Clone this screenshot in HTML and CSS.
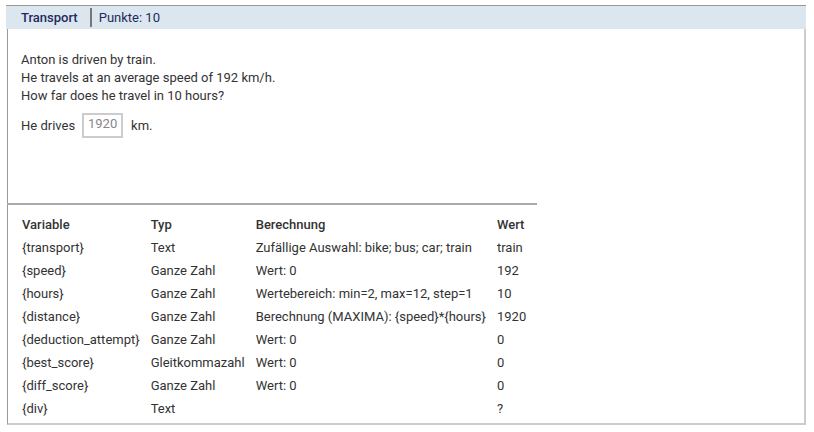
FILE: index.html
```html
<!DOCTYPE html>
<html>
<head>
<meta charset="utf-8">
<link rel="stylesheet" href="styles.css">
</head>
<body>
<div class="panel">
  <div class="panel-head">
    <span class="title">Transport</span>
    <span class="divider"></span>
    <span class="points">Punkte: 10</span>
  </div>
  <div class="panel-body">
    <div class="question">
      <p class="text">Anton is driven by train.<br>He travels at an average speed of 192 km/h.<br>How far does he travel in 10 hours?</p>
      <div class="answer">
        <span>He drives</span>
        <span class="input">1920</span>
        <span>km.</span>
      </div>
    </div>
    <div class="vars">
      <table class="var-table">
        <thead>
          <tr><th>Variable</th><th>Typ</th><th>Berechnung</th><th>Wert</th></tr>
        </thead>
        <tbody>
          <tr><td>{transport}</td><td>Text</td><td>Zufällige Auswahl: bike; bus; car; train</td><td>train</td></tr>
          <tr><td>{speed}</td><td>Ganze Zahl</td><td>Wert: 0</td><td>192</td></tr>
          <tr><td>{hours}</td><td>Ganze Zahl</td><td>Wertebereich: min=2, max=12, step=1</td><td>10</td></tr>
          <tr><td>{distance}</td><td>Ganze Zahl</td><td>Berechnung (MAXIMA): {speed}*{hours}</td><td>1920</td></tr>
          <tr><td>{deduction_attempt}</td><td>Ganze Zahl</td><td>Wert: 0</td><td>0</td></tr>
          <tr><td>{best_score}</td><td>Gleitkommazahl</td><td>Wert: 0</td><td>0</td></tr>
          <tr><td>{diff_score}</td><td>Ganze Zahl</td><td>Wert: 0</td><td>0</td></tr>
          <tr><td>{div}</td><td>Text</td><td></td><td>?</td></tr>
        </tbody>
      </table>
    </div>
  </div>
</div>
</body>
</html>
```

FILE: styles.css
```css
html, body {
  margin: 0;
  padding: 0;
  background: #fff;
}
body {
  font-family: Roboto, "Liberation Sans", sans-serif;
  font-size: 13px;
  color: #333;
}
.panel {
  margin: 5px 0 0 6px;
  width: 800px;
  border-top: 1px solid #999;
}
.panel-head {
  height: 23px;
  background: #dce6ef;
  display: flex;
  align-items: center;
  padding-left: 15px;
}
.title {
  font-weight: 500;
  color: #1e2b5c;
}
.divider {
  width: 2px;
  height: 19px;
  background: #777;
  margin: 0 7px 0 12px;
}
.points {
  color: #1e2b5c;
}
.panel-body {
  margin-left: 1px;
  border-left: 1px solid #999;
  border-right: 2px solid #ccc;
  border-bottom: 2px solid #ccc;
}
.question {
  padding: 22px 0 65px 13px;
}
.text {
  margin: 0;
  line-height: 18px;
}
.answer {
  margin-top: 8px;
  display: flex;
  align-items: center;
  height: 25px;
}
.input {
  box-sizing: border-box;
  width: 41px;
  height: 25px;
  border: 2px solid #ccc;
  color: #888;
  text-align: center;
  line-height: 17px;
  margin: 0 8px 0 7px;
}
.vars {
  width: 530px;
  margin-left: -1px;
  border-top: 2px solid #aaa;
  padding: 8px 0 3px;
}
.var-table {
  border-collapse: collapse;
  margin-left: 9.5px;
}
.var-table th,
.var-table td {
  text-align: left;
  padding: 0 5.5px;
  height: 23px;
  white-space: nowrap;
}
.var-table th {
  font-weight: 500;
}
```
